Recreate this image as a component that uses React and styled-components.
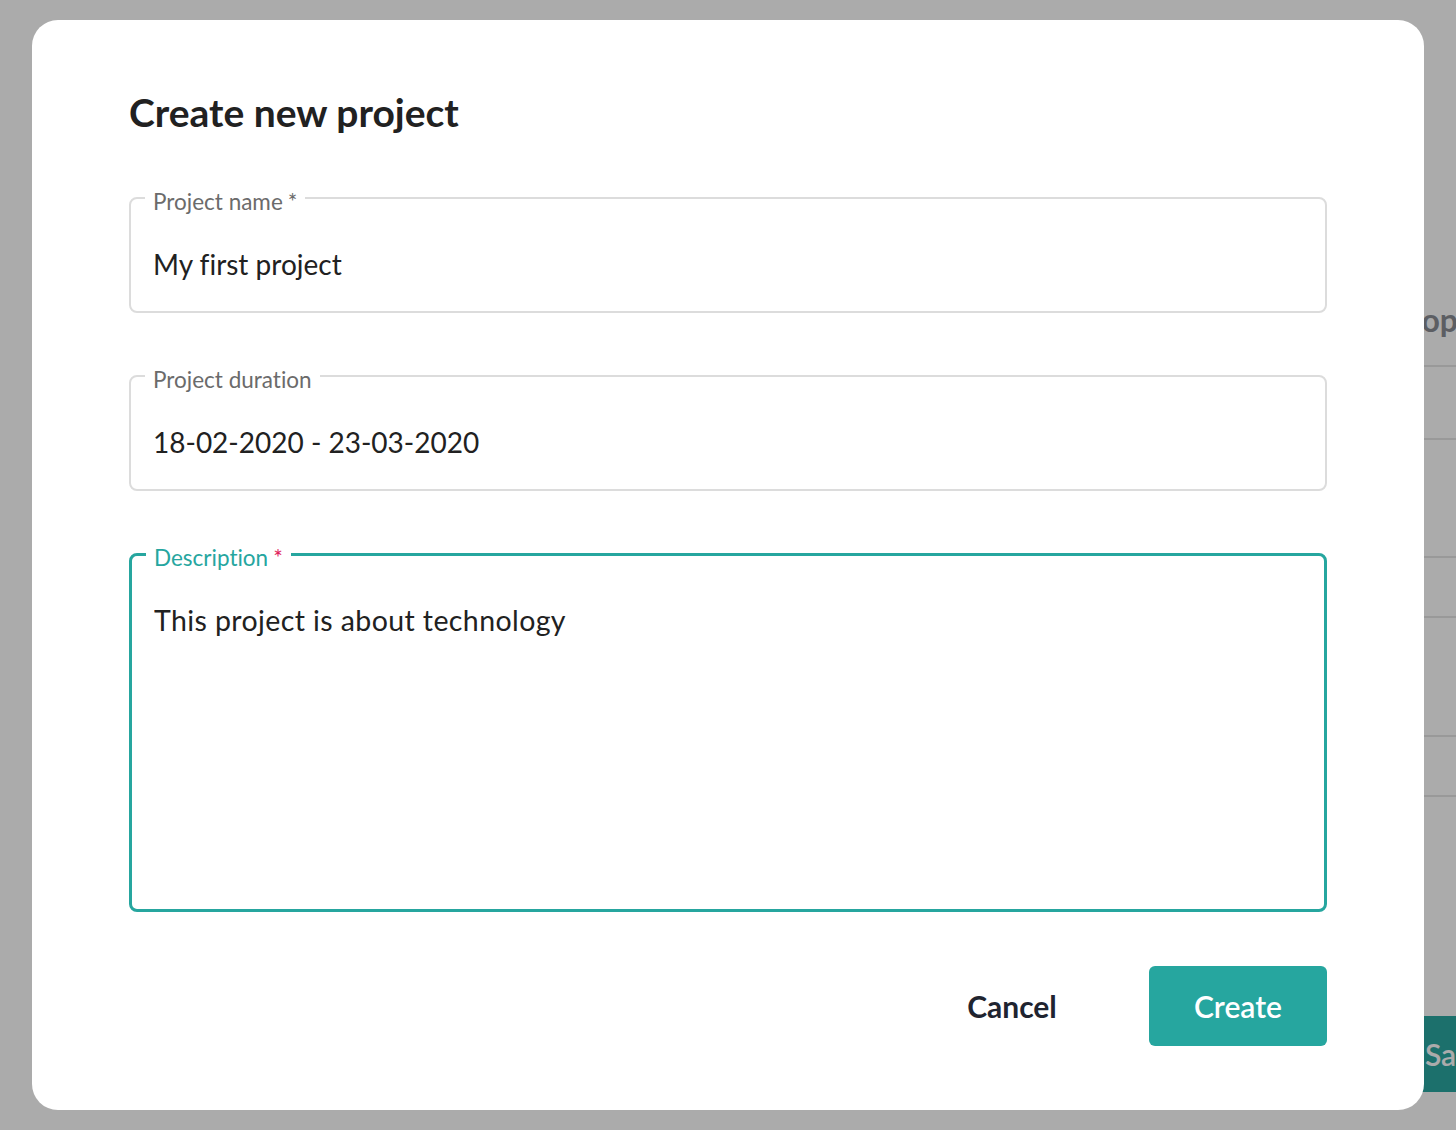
import React from 'react';
import styled, { createGlobalStyle } from 'styled-components';

const teal = '#26a69f';
const ink = '#212121';

const GlobalStyle = createGlobalStyle`
  html, body {
    margin: 0;
    padding: 0;
    height: 100%;
    overflow: hidden;
    background: #ffffff;
    font-family: Lato, "Open Sans", sans-serif;
    font-variant-ligatures: none;
  }
`;

const Page = styled.div`
  width: 100%;
  height: 100vh;
  display: grid;
  grid-template-columns: 1fr 90px;
`;

const Side = styled.aside`
  min-width: 0;
  width: 420px;
  padding-top: 300px;
  display: flex;
  flex-direction: column;
  color: #8a8d94;
`;

const SideTitle = styled.h2`
  margin: 0 0 25px;
  font-size: 32px;
  font-weight: 700;
  line-height: 40px;
  padding-left: 20px;
  white-space: nowrap;
`;

const SideRow = styled.div`
  box-sizing: border-box;
  height: ${(p) => p.h}px;
  border-top: 2px solid #e4e4e4;
`;

const SaveButton = styled.button`
  margin-top: 68px;
  width: 180px;
  height: 76px;
  border: none;
  border-radius: 6px;
  background: #2aa8a1;
  color: #ffffff;
  font: 600 30px Lato, sans-serif;
`;

const Overlay = styled.div`
  position: fixed;
  inset: 0;
  background: rgba(0, 0, 0, 0.33);
  padding: 20px 32px;
  box-sizing: border-box;
  display: flex;
`;

const Dialog = styled.div`
  flex: 1;
  background: #ffffff;
  border-radius: 26px;
  padding: 68px 97px 0;
  display: flex;
  flex-direction: column;
`;

const Title = styled.h1`
  margin: 0 0 46px;
  font-size: 39px;
  font-weight: 700;
  line-height: 48px;
  color: ${ink};
`;

const Field = styled.fieldset`
  margin: 0 0 ${(p) => p.gap || 0}px;
  padding: 0 22px;
  height: ${(p) => p.h}px;
  box-sizing: border-box;
  border: ${(p) => (p.focused ? `3px solid ${teal}` : '2px solid #dcdcdc')};
  border-radius: 8px;
  min-width: 0;
`;

const Legend = styled.legend`
  margin-left: -8px;
  padding: 8px 8px 0;
  font-size: 22.5px;
  line-height: 24px;
  color: ${(p) => (p.focused ? teal : '#6b6b6b')};
`;

const Star = styled.span`
  margin-left: 5px;
  color: ${(p) => (p.red ? '#e0245e' : 'inherit')};
`;

const Input = styled.input`
  display: block;
  width: 100%;
  box-sizing: border-box;
  margin-top: 32px;
  padding: 0;
  border: none;
  outline: none;
  background: transparent;
  font: 400 28px Lato, sans-serif;
  font-variant-ligatures: none;
  line-height: 36px;
  color: ${ink};
`;

const TextArea = styled.textarea`
  display: block;
  width: 100%;
  box-sizing: border-box;
  margin-top: 32px;
  padding: 0;
  height: 260px;
  border: none;
  outline: none;
  resize: none;
  background: transparent;
  font: 400 28.5px Lato, sans-serif;
  letter-spacing: 0.4px;
  line-height: 36px;
  color: ${ink};
`;

const Actions = styled.div`
  margin-top: 54px;
  display: flex;
  justify-content: flex-end;
  gap: 48px;
`;

const Button = styled.button`
  width: 178px;
  height: 80px;
  border: none;
  border-radius: 6px;
  font: ${(p) => (p.primary ? 600 : 700)} 30px Lato, sans-serif;
  color: ${(p) => (p.primary ? '#ffffff' : '#1f2430')};
  background: ${(p) => (p.primary ? teal : 'transparent')};
  cursor: pointer;
`;

export default function App() {
  return (
    <>
      <GlobalStyle />
      <Page>
        <div />
        <Side>
          <SideTitle>Shop</SideTitle>
          <SideRow h={73} />
          <SideRow h={118} />
          <SideRow h={60} />
          <SideRow h={119} />
          <SideRow h={60} />
          <SideRow h={153} />
          <SaveButton>Save</SaveButton>
        </Side>
      </Page>
      <Overlay>
        <Dialog>
          <Title>Create new project</Title>
          <Field h={131} gap={47}>
            <Legend>
              Project name<Star>*</Star>
            </Legend>
            <Input readOnly defaultValue="My first project" />
          </Field>
          <Field h={131} gap={47}>
            <Legend>Project duration</Legend>
            <Input readOnly defaultValue="18-02-2020 - 23-03-2020" />
          </Field>
          <Field h={374} focused>
            <Legend focused>
              Description<Star red>*</Star>
            </Legend>
            <TextArea readOnly defaultValue="This project is about technology" />
          </Field>
          <Actions>
            <Button>Cancel</Button>
            <Button primary>Create</Button>
          </Actions>
        </Dialog>
      </Overlay>
    </>
  );
}
